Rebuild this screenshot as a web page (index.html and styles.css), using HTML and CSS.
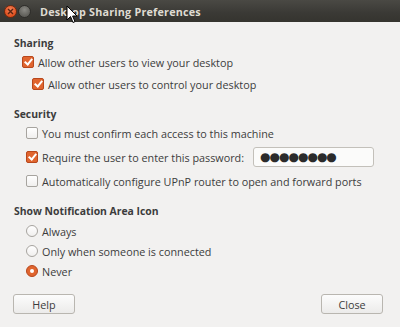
FILE: index.html
```html
<!DOCTYPE html>
<html><head>
    <meta charset="UTF-8">
    <title>Desktop Sharing Preferences</title>
    <link rel="stylesheet" href="styles.css"></head><body>
<div class="window">
    <div class="titlebar">
        <span class="wbtn close"><svg width="7" height="7" viewBox="0 0 7 7"><path d="M1 1L6 6M6 1L1 6" stroke="#5a2412" stroke-width="1.4"/></svg></span>
        <span class="wbtn mini"></span>
        <span class="title">Desktop Sharing Preferences</span>
        <svg class="cursor" width="12" height="19" viewBox="0 0 12 19"><path d="M1 1L1 15L4.5 11.5L7 17.5L9 16.6L6.6 11L11 11Z" fill="#fff" stroke="#000" stroke-width="1"/></svg>
    </div>

    <div class="content">
        <div class="heading">Sharing</div>
        <label class="option first"><span class="check on"></span>Allow other users to view your desktop</label>
        <label class="option sub"><span class="check on"></span>Allow other users to control your desktop</label>

        <div class="heading">Security</div>
        <label class="option"><span class="check"></span>You must confirm each access to this machine</label>
        <div class="option">
            <span class="check on"></span>Require the user to enter this password:
            <span class="entry">●●●●●●●●</span>
        </div>
        <label class="option"><span class="check"></span>Automatically configure UPnP router to open and forward ports</label>

        <div class="heading">Show Notification Area Icon</div>
        <label class="option radio-row"><span class="radio"></span>Always</label>
        <label class="option radio-row"><span class="radio"></span>Only when someone is connected</label>
        <label class="option radio-row"><span class="radio on"></span>Never</label>

        <div class="buttons">
            <button class="btn">Help</button>
            <button class="btn">Close</button>
        </div>
    </div>
</div>
</body></html>
```

FILE: styles.css
```css
body {
    margin: 0;
    padding: 0;
    font-family: "Open Sans", "DejaVu Sans", sans-serif;
    font-size: 10.8px;
    color: #3c3c3c;
    background-color: #f2f1f0;
}
.window {
    width: 400px;
    height: 327px;
    overflow: hidden;
}
.titlebar {
    position: relative;
    height: 22px;
    background: linear-gradient(#4a4944, #3a3935 60%, #35342f);
    display: flex;
    align-items: center;
    padding-left: 4px;
    box-sizing: border-box;
}
.wbtn {
    width: 13px;
    height: 13px;
    border-radius: 50%;
    margin-right: 1px;
    display: flex;
    align-items: center;
    justify-content: center;
}
.wbtn.close {
    background: radial-gradient(circle at 50% 35%, #f3835a, #df4f1e 70%);
    border: 1px solid #6e2a10;
    box-sizing: border-box;
}
.wbtn.mini {
    background: radial-gradient(circle at 50% 35%, #8a8984, #5f5e59 70%);
    border: 1px solid #2e2d2a;
    box-sizing: border-box;
}
.title {
    margin-left: 8px;
    color: #dfdbd2;
    font-weight: bold;
    font-size: 10.8px;
    letter-spacing: 0.2px;
}
.cursor {
    position: absolute;
    left: 66px;
    top: 5px;
}
.content {
    padding: 12px 14px 0 14px;
}
.heading {
    font-weight: bold;
    font-size: 10.4px;
    height: 18px;
    line-height: 18px;
    margin-top: 11px;
}
.heading:first-child {
    margin-top: 0;
}
.option {
    display: flex;
    align-items: center;
    height: 20px;
    padding-left: 12px;
    margin-top: 4px;
    white-space: nowrap;
}
.heading + .option {
    margin-top: 0;
}
.option.first {
    padding-left: 8px;
}
.option.sub {
    margin-top: 2px;
    padding-left: 18px;
}
.check, .radio {
    width: 10px;
    height: 10px;
    border: 1px solid #a7a49f;
    background: linear-gradient(#ffffff, #f0efee);
    border-radius: 2px;
    margin-right: 4px;
    flex-shrink: 0;
    position: relative;
}
.check.on {
    background: #e0652f;
    border-color: #b8471c;
}
.check.on::after {
    content: "";
    position: absolute;
    left: 3px;
    top: 0px;
    width: 3px;
    height: 6px;
    border: solid #fff;
    border-width: 0 2px 2px 0;
    transform: rotate(40deg);
}
.entry {
    margin-left: 9px;
    width: 121px;
    height: 20px;
    flex-shrink: 0;
    box-sizing: border-box;
    border: 1px solid #c3c0ba;
    border-radius: 3px;
    background: #fbfbfa;
    color: #2b2b2b;
    font-size: 12px;
    letter-spacing: -1px;
    padding-left: 6px;
    line-height: 18px;
}
.radio-row {
    margin-top: 0;
}
.heading + .radio-row {
    margin-top: 1px;
}
.radio {
    border-radius: 50%;
}
.radio.on {
    background: #e0652f;
    border-color: #b8471c;
}
.radio.on::after {
    content: "";
    position: absolute;
    left: 3px;
    top: 3px;
    width: 4px;
    height: 4px;
    border-radius: 50%;
    background: #fff;
}
.buttons {
    display: flex;
    justify-content: space-between;
    margin-top: 13px;
    padding-right: 3px;
}
.btn {
    width: 62px;
    height: 20px;
    margin-left: -1px;
    font-family: inherit;
    font-size: 10.8px;
    color: #3c3c3c;
    border: 1px solid #b9b6b0;
    border-radius: 3px;
    background: linear-gradient(#fcfcfc, #ecebea);
    padding: 0;
}
```
